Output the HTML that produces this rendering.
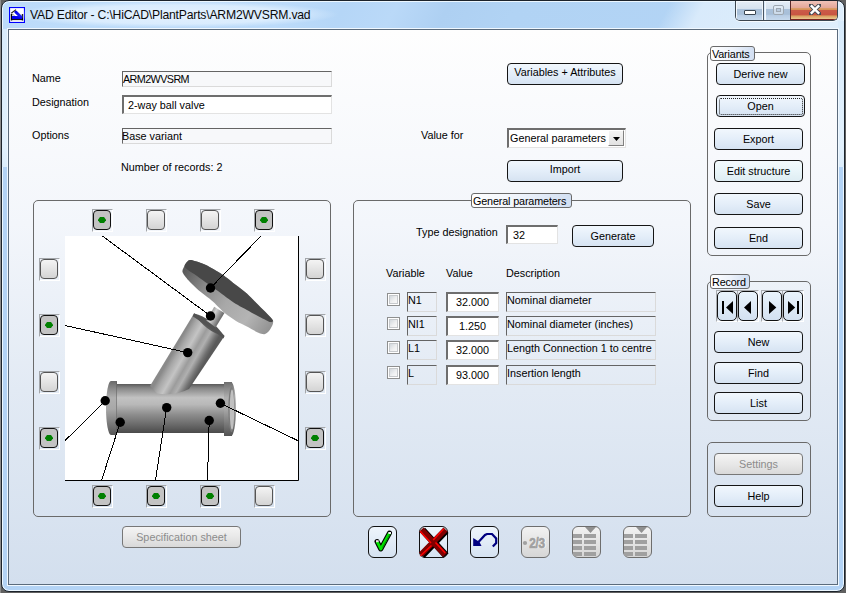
<!DOCTYPE html>
<html><head><meta charset="utf-8">
<style>
*{box-sizing:border-box}
html,body{margin:0;padding:0}
body{width:846px;height:593px;position:relative;overflow:hidden;background:#606060;font-family:"Liberation Sans",sans-serif;font-size:11px;color:#000}
.a{position:absolute}
#win{left:1px;top:0;width:844px;height:592px;border:1px solid #1c232b;border-radius:8px 8px 8px 8px;background:linear-gradient(118deg,rgba(255,255,255,0) 0%,rgba(255,255,255,0) 78%,rgba(242,249,255,0.6) 82%,rgba(242,249,255,0.7) 100%) 0 0/100% 30px no-repeat,linear-gradient(118deg,#bcdbfa 0%,#bddcfa 12%,#b9d9f9 22%,#bcdbfa 33%,#b5d6f7 40%,#bad9f8 46%,#aed0f2 52%,#b1d3f4 60%,#b4d5f6 100%) 0 0/100% 40px no-repeat,#b3d3f5;box-shadow:inset 0 0 0 1px #ecf7ff}
#client{left:8px;top:29px;width:830px;height:556px;border:1px solid #5b6b7c;background:linear-gradient(to bottom,#fefefe 0%,#f3f6fb 35%,#e2eaf4 65%,#d3dfee 100%);box-shadow:0 0 0 1px #f0f8ff}
.t{position:absolute;white-space:pre;line-height:15px;font-size:10.8px}
.btn{position:absolute;border:1px solid #151515;border-radius:4px;background:linear-gradient(to bottom,#f1f7fd 0%,#e4eef9 50%,#d6e3f2 100%);text-align:center;white-space:pre;font-size:10.8px}
.btn.dis{border-color:#777;background:linear-gradient(to bottom,#f4f4f4 0%,#e8e8e8 50%,#d9d9d9 100%);color:#8c8c8c}
.fld{position:absolute;border-top:1px solid #646464;border-left:1px solid #646464;border-right:1px solid #dadada;border-bottom:1px solid #dadada;background:#f7f8fa;white-space:pre;font-size:10.8px;line-height:13px}
.fld2{position:absolute;border-top:2px solid #6e6e6e;border-left:2px solid #6e6e6e;border-right:1px solid #e3e3e3;border-bottom:1px solid #e3e3e3;background:#fff;white-space:pre;font-size:10.8px;line-height:13px}
.grp{position:absolute;border:1px solid #6a6a6a;border-radius:5px}
.glab{position:absolute;border:1px solid #6a6a6a;border-radius:3px;background:linear-gradient(to right,#ffffff 0%,#eef3fb 50%,#d2dff2 100%);white-space:pre;font-size:10.8px;line-height:14px;padding-left:1px;letter-spacing:-0.15px}
.tog{position:absolute;width:21px;height:23px;border-top:1px solid #a3a6aa;border-left:1px solid #a3a6aa;border-right:1px solid #fff;border-bottom:1px solid #fff}
.tog i{position:absolute;left:0px;top:0px;width:18px;height:20px;border:1px solid #111;border-radius:4px;background:#c3c3c3}
.tog.off i{border-color:#555;background:linear-gradient(to bottom,#f4f4f4,#d4d4d4)}
.tog b{position:absolute;left:4px;top:6px;width:8px;height:6px;background:#008000;clip-path:polygon(25% 0,75% 0,100% 45%,100% 55%,75% 100%,25% 100%,0 55%,0 45%)}
.cb{position:absolute;width:13px;height:13px;border:1px solid #8e8f8f;background:#fff}
.cb::after{content:"";box-sizing:border-box;position:absolute;left:1px;top:1px;width:9px;height:9px;border:1px solid #c6c9cc;background:linear-gradient(135deg,#d2d8dd,#f0f1f2 60%,#f8f8f8)}
.tb{position:absolute;width:29px;height:32px;border:1px solid #111;border-radius:6px;background:linear-gradient(to bottom,#eef5fc,#d5e2f1)}
.tb.dis{border-color:#6e6e6e;background:linear-gradient(to bottom,#f2f2f2,#d6d6d6)}
.nav{position:absolute;width:22px;height:32px;border-top:1px solid #a9acb0;border-left:1px solid #a9acb0;border-right:1px solid #fff;border-bottom:1px solid #fff}
.nav i{position:absolute;left:0;top:0;width:20px;height:30px;border:1px solid #111;border-radius:5px;background:linear-gradient(to bottom,#eaf4fc,#d3e1f1)}
</style></head>
<body>
<div class="a" style="left:0;top:0;width:1px;height:593px;background:#8c8c8c"></div>
<div id="win" class="a"></div>
<!-- title -->
<svg class="a" style="left:9px;top:7px" width="16" height="16" viewBox="0 0 16 16">
<rect x="0.5" y="0.5" width="15" height="15" fill="#fff" stroke="#0000ff" stroke-width="1.2"/>
<path d="M2.5 7 V13.5 M13.5 7 V13.5" stroke="#000" stroke-width="1.4"/>
<rect x="3" y="9" width="10" height="3.2" fill="#0000f0"/>
<path d="M3 12.6 H13" stroke="#000" stroke-width="1"/>
<path d="M6.8 5 L12 10" stroke="#0000f0" stroke-width="3" stroke-linecap="round"/>
<path d="M2.2 6.2 L7 2.6" stroke="#222" stroke-width="1.1"/>
<path d="M3 7 L5.5 8.5" stroke="#777" stroke-width="0.8"/>
</svg>
<div class="a" style="left:12px;top:1px;width:326px;height:27px;background:radial-gradient(closest-side,rgba(232,244,255,0.9) 0%,rgba(228,242,255,0.75) 70%,rgba(210,232,252,0) 100%)"></div>
<div class="t" style="left:30px;top:7px;font-size:12.2px;line-height:16px;color:#0a0a0a;letter-spacing:-0.2px">VAD Editor - C:\HiCAD\PlantParts\ARM2WVSRM.vad</div>
<!-- window controls -->
<div class="a" style="left:735px;top:1px;width:103px;height:20px;border:1px solid #3c4650;border-top:none;border-radius:0 0 5px 5px;overflow:hidden;box-shadow:0 1px 0 rgba(255,255,255,0.75)">
  <div class="a" style="left:0;top:0;width:28px;height:19px;background:linear-gradient(to bottom,#f4f8fc 0%,#e2ebf5 8%,#d6e2ef 40%,#aac1da 44%,#a8bfd8 70%,#b8cde4 76%,#c6d9ed 100%);border-right:1px solid #4a5563;box-shadow:inset -1px 0 0 #eef4fa,inset 1px 1px 0 #f4f8fc"></div>
  <div class="a" style="left:29px;top:0;width:26px;height:19px;background:linear-gradient(to bottom,#f4f8fc 0%,#e2ebf5 8%,#d6e2ef 40%,#aac1da 44%,#a8bfd8 70%,#b8cde4 76%,#c6d9ed 100%);border-right:1px solid #5a2a2a;box-shadow:inset 1px 1px 0 #f4f8fc"></div>
  <div class="a" style="left:55px;top:0;width:47px;height:19px;background:linear-gradient(to bottom,#efc2b8 0%,#e3a597 40%,#d99a5c 42%,#d6905a 50%,#cb5b48 52%,#c85443 78%,#d89a5a 82%,#e8c890 100%);border-bottom:1px solid #7a2020"></div>
  <div class="a" style="left:8px;top:9px;width:12px;height:5px;background:#fff;border:1px solid #3a4550;border-radius:1px"></div>
  <div class="a" style="left:37px;top:4px;width:11px;height:10px;border:1px solid #9ea7b1;border-radius:2px;background:rgba(230,238,246,0.6)"></div>
  <div class="a" style="left:40px;top:7px;width:5px;height:4px;border:1px solid #9ea7b1;background:#b9cbdf"></div>
  <svg class="a" style="left:73px;top:3px" width="12" height="11" viewBox="0 0 12 11"><path d="M1.5 1 L10.5 10 M10.5 1 L1.5 10" stroke="#454c55" stroke-width="4.2" stroke-linecap="square"/><path d="M1.8 1.3 L10.2 9.7 M10.2 1.3 L1.8 9.7" stroke="#fff" stroke-width="2.4"/></svg>
</div>
<div class="a" style="left:2px;top:29px;width:6px;height:138px;background:linear-gradient(to bottom,#d8ebfb,#e2f1fd 85%,#dcedfb)"></div>
<div class="a" style="left:838px;top:21px;width:6px;height:146px;background:linear-gradient(to bottom,#d8ebfb,#e2f1fd 85%,#dcedfb)"></div>
<div id="client" class="a"></div>

<!-- top-left form -->
<div class="t" style="left:32px;top:71px">Name</div>
<div class="t" style="left:32px;top:95px">Designation</div>
<div class="t" style="left:32px;top:128px">Options</div>
<div class="fld" style="left:122px;top:71px;width:210px;height:16px;padding-left:0px;line-height:15px;letter-spacing:-0.6px">ARM2WVSRM</div>
<div class="fld2" style="left:122px;top:95px;width:210px;height:19px;padding-left:4px;padding-top:2px">2-way ball valve</div>
<div class="fld" style="left:122px;top:128px;width:210px;height:16px;line-height:15px;text-indent:-1px">Base variant</div>
<div class="t" style="left:121px;top:160px">Number of records: 2</div>

<div class="btn" style="left:507px;top:63px;width:116px;height:22px;line-height:17px">Variables + Attributes</div>
<div class="t" style="left:421px;top:128px">Value for</div>
<div class="fld2" style="left:507px;top:128px;width:119px;height:20px;padding-left:1px;padding-top:2px">General parameters</div>
<div class="a" style="left:608px;top:130px;width:16px;height:16px;background:linear-gradient(#f4f4f4,#e2e2e2);border-left:1px solid #fff;border-top:1px solid #fff;border-right:1px solid #808080;border-bottom:1px solid #808080"></div>
<svg class="a" style="left:613px;top:137px" width="8" height="5"><path d="M0 0H7L3.5 4Z" fill="#000"/></svg>
<div class="btn" style="left:507px;top:160px;width:116px;height:22px;line-height:17px">Import</div>

<!-- picture group -->
<div class="grp" style="left:33px;top:200px;width:298px;height:317px"></div>


<!-- picture -->
<svg class="a" style="left:0;top:0" width="846" height="593" viewBox="0 0 846 593">
<defs>
<linearGradient id="gPipe" x1="0" y1="384" x2="0" y2="433" gradientUnits="userSpaceOnUse">
<stop offset="0" stop-color="#5a5a5a"/><stop offset="0.08" stop-color="#858585"/><stop offset="0.28" stop-color="#c2c2c2"/><stop offset="0.42" stop-color="#b8b8b8"/><stop offset="0.62" stop-color="#8e8e8e"/><stop offset="0.85" stop-color="#666"/><stop offset="1" stop-color="#4a4a4a"/>
</linearGradient>
<linearGradient id="gBon" x1="176" y1="347" x2="204" y2="363" gradientUnits="userSpaceOnUse">
<stop offset="0" stop-color="#8a8a8a"/><stop offset="0.15" stop-color="#a8a8a8"/><stop offset="0.35" stop-color="#c4c4c4"/><stop offset="0.55" stop-color="#9c9c9c"/><stop offset="0.7" stop-color="#b0b0b0"/><stop offset="0.9" stop-color="#707070"/><stop offset="1" stop-color="#5a5a5a"/>
</linearGradient>
<linearGradient id="gRim" x1="183" y1="272" x2="270" y2="332" gradientUnits="userSpaceOnUse">
<stop offset="0" stop-color="#5a5a5a"/><stop offset="0.25" stop-color="#8a8a8a"/><stop offset="0.5" stop-color="#a8a8a8"/><stop offset="0.75" stop-color="#b4b4b4"/><stop offset="1" stop-color="#909090"/>
</linearGradient>
<linearGradient id="gStem" x1="208" y1="312" x2="220" y2="319" gradientUnits="userSpaceOnUse">
<stop offset="0" stop-color="#7a7a7a"/><stop offset="0.45" stop-color="#d0d0d0"/><stop offset="1" stop-color="#707070"/>
</linearGradient>
<linearGradient id="gFl" x1="0" y1="381" x2="0" y2="437" gradientUnits="userSpaceOnUse">
<stop offset="0" stop-color="#6a6a6a"/><stop offset="0.3" stop-color="#b0b0b0"/><stop offset="0.5" stop-color="#a8a8a8"/><stop offset="1" stop-color="#505050"/>
</linearGradient>
</defs>
<rect x="65" y="236" width="233" height="244" fill="#fff"/>
<path d="M298.5 236V480.5H65" stroke="#000" fill="none"/>
<!-- pipe -->
<rect x="112" y="384" width="115" height="49" fill="url(#gPipe)"/>
<path d="M117 381 L111 381 A5 27 0 0 0 111 435 L117 435 Z" fill="url(#gFl)"/>
<path d="M116.5 382 V434" stroke="#5a5a5a" stroke-width="0.8" opacity="0.6"/>
<rect x="224" y="382" width="8" height="54" fill="url(#gFl)"/>
<ellipse cx="231" cy="409" rx="5" ry="27" fill="url(#gFl)"/>
<ellipse cx="231.5" cy="409.5" rx="3.2" ry="22.5" fill="#7c7c7c"/>
<ellipse cx="232" cy="409.5" rx="2.3" ry="20" fill="#c0c0c0"/>
<!-- bonnet -->
<path d="M194 313.5 L224.3 336.3 L189 389 Q175 396 157 393.6 L150 386 Z" fill="url(#gBon)"/>
<path d="M194 313.5 Q212 318 224.3 336.3 Q206 332 194 313.5Z" fill="#585858"/>
<!-- stem -->
<path d="M214.2 306.8 L224.5 312.9 L215.3 328.1 L205.5 322 Z" fill="url(#gStem)"/>
<path d="M194.1 313.3 Q211 322 224.5 335.7 L223.5 338.5 Q209 326 192.6 316.2 Z" fill="#525252"/>
<!-- disc -->
<path d="M184.5 266.0 C183.8 267.4 182.0 270.1 182.5 272.0 C183.0 273.9 186.5 278.1 188.4 280.3 C190.3 282.5 194.6 286.7 196.9 288.7 C199.2 290.7 203.1 293.7 205.3 295.5 C207.5 297.3 211.1 299.8 213.7 302.2 C216.3 304.6 222.0 310.8 225.0 313.3 C228.0 315.8 233.1 319.2 236.0 321.0 C238.9 322.8 244.0 325.0 246.9 326.5 C249.8 328.0 255.6 331.5 257.9 332.5 C260.2 333.5 262.9 334.4 264.4 334.2 C265.9 334.0 267.9 332.2 269.0 331.0 C270.1 329.8 272.0 326.4 272.5 325.0 C273.0 323.6 273.5 321.8 273.0 320.5 C272.5 319.2 270.8 317.6 268.8 315.5 C266.8 313.4 260.8 307.5 257.9 304.6 C255.0 301.7 249.8 296.2 246.9 293.6 C244.0 291.0 239.3 287.5 236.0 284.9 C232.7 282.3 226.3 277.1 222.2 274.4 C218.1 271.7 209.5 266.6 205.3 264.7 C201.1 262.8 193.4 260.4 191.0 260.0 C188.6 259.6 188.4 260.7 187.5 261.5 C186.6 262.3 185.2 264.6 184.5 266.0Z" fill="url(#gRim)"/>
<path d="M184.5 266.0 C184.4 264.9 186.6 262.3 187.5 261.5 C188.4 260.7 188.6 259.6 191.0 260.0 C193.4 260.4 201.1 262.8 205.3 264.7 C209.5 266.6 218.1 271.7 222.2 274.4 C226.3 277.1 232.7 282.3 236.0 284.9 C239.3 287.5 244.0 291.0 246.9 293.6 C249.8 296.2 255.0 301.7 257.9 304.6 C260.8 307.5 266.8 313.4 268.8 315.5 C270.8 317.6 272.8 319.6 273.0 320.5 C273.2 321.4 272.0 322.6 270.0 322.0 C268.0 321.4 261.0 317.6 257.9 316.0 C254.8 314.4 249.8 311.6 246.9 310.0 C244.0 308.4 238.5 305.5 236.0 304.0 C233.5 302.5 230.1 300.0 228.0 298.5 C225.9 297.0 222.3 294.2 220.0 292.5 C217.7 290.8 213.9 288.2 210.8 286.0 C207.7 283.8 200.0 278.1 197.0 276.0 C194.0 273.9 189.7 271.3 188.0 270.0 C186.3 268.7 184.6 267.1 184.5 266.0Z" fill="#484848"/>
<!-- lines -->
<g stroke="#000" stroke-width="1" fill="none" shape-rendering="crispEdges">
<path d="M102.4 236 L210.5 316"/>
<path d="M261 236 L210.5 288"/>
<path d="M65 325.5 L187.7 352.6"/>
<path d="M65 440.7 L105.2 400.8"/>
<path d="M298 440.7 L220.4 403.3"/>
<path d="M101.7 480 L120.2 422.3"/>
<path d="M155.5 480 L166.7 407.6"/>
<path d="M207.5 480 L209.2 420.5"/>
</g>
<g fill="#000">
<circle cx="210.5" cy="288" r="4.7"/><circle cx="210.5" cy="316" r="4.7"/><circle cx="187.7" cy="352.6" r="4.7"/>
<circle cx="105.2" cy="400.8" r="4.7"/><circle cx="120.2" cy="422.3" r="4.7"/><circle cx="166.7" cy="407.6" r="4.7"/>
<circle cx="220.4" cy="403.3" r="4.7"/><circle cx="209.2" cy="420.5" r="4.7"/>
</g>
</svg>
<div class="tog" style="left:92px;top:209px"><i><b></b></i></div>
<div class="tog off" style="left:146px;top:209px"><i></i></div>
<div class="tog off" style="left:200px;top:209px"><i></i></div>
<div class="tog" style="left:254px;top:209px"><i><b></b></i></div>
<div class="tog" style="left:92px;top:485px"><i><b></b></i></div>
<div class="tog" style="left:146px;top:485px"><i><b></b></i></div>
<div class="tog" style="left:200px;top:485px"><i><b></b></i></div>
<div class="tog off" style="left:254px;top:485px"><i></i></div>
<div class="tog off" style="left:39px;top:258px"><i></i></div>
<div class="tog" style="left:39px;top:314px"><i><b></b></i></div>
<div class="tog off" style="left:39px;top:371px"><i></i></div>
<div class="tog" style="left:39px;top:427px"><i><b></b></i></div>
<div class="tog off" style="left:305px;top:258px"><i></i></div>
<div class="tog off" style="left:305px;top:314px"><i></i></div>
<div class="tog off" style="left:305px;top:371px"><i></i></div>
<div class="tog" style="left:305px;top:427px"><i><b></b></i></div>

<!-- general parameters group -->
<div class="grp" style="left:353px;top:200px;width:338px;height:317px"></div>
<div class="glab" style="left:471px;top:193px;width:101px;height:15px">General parameters</div>
<div class="t" style="left:416px;top:225px">Type designation</div>
<div class="fld2" style="left:506px;top:225px;width:52px;height:19px;padding-left:5px;padding-top:2px">32</div>
<div class="btn" style="left:572px;top:225px;width:82px;height:22px;line-height:20px">Generate</div>
<div class="t" style="left:386px;top:266px">Variable</div>
<div class="t" style="left:446px;top:266px">Value</div>
<div class="t" style="left:506px;top:266px">Description</div>

<div class="cb" style="left:387px;top:293px"></div>
<div class="fld" style="left:407px;top:292px;width:30px;height:20px;background:transparent;padding-top:1px">N1</div>
<div class="fld2" style="left:446px;top:292px;width:53px;height:20px;text-align:center;padding-top:2px;padding-right:1px">32.000</div>
<div class="fld" style="left:506px;top:292px;width:150px;height:20px;background:transparent;padding-top:1px">Nominal diameter</div>

<div class="cb" style="left:387px;top:317px"></div>
<div class="fld" style="left:407px;top:316px;width:30px;height:20px;background:transparent;padding-top:1px">NI1</div>
<div class="fld2" style="left:446px;top:316px;width:53px;height:20px;text-align:center;padding-top:2px;padding-right:1px">1.250</div>
<div class="fld" style="left:506px;top:316px;width:150px;height:20px;background:transparent;padding-top:1px">Nominal diameter (inches)</div>

<div class="cb" style="left:387px;top:341px"></div>
<div class="fld" style="left:407px;top:340px;width:30px;height:20px;background:transparent;padding-top:1px">L1</div>
<div class="fld2" style="left:446px;top:340px;width:53px;height:20px;text-align:center;padding-top:2px;padding-right:1px">32.000</div>
<div class="fld" style="left:506px;top:340px;width:150px;height:20px;background:transparent;padding-top:1px">Length Connection 1 to centre</div>

<div class="cb" style="left:387px;top:366px"></div>
<div class="fld" style="left:407px;top:365px;width:30px;height:20px;background:transparent;padding-top:1px">L</div>
<div class="fld2" style="left:446px;top:365px;width:53px;height:20px;text-align:center;padding-top:2px;padding-right:1px">93.000</div>
<div class="fld" style="left:506px;top:365px;width:150px;height:20px;background:transparent;padding-top:1px">Insertion length</div>

<!-- variants group -->
<div class="grp" style="left:707px;top:52px;width:104px;height:204px"></div>
<div class="glab" style="left:710px;top:46px;width:45px;height:15px">Variants</div>
<div class="btn" style="left:716px;top:63px;width:89px;height:22px;line-height:20px">Derive new</div>
<div class="btn" style="left:716px;top:95px;width:89px;height:22px;line-height:20px">Open</div>
<div class="a" style="left:719px;top:98px;width:84px;height:17px;border:1px dotted #222;border-radius:2px"></div>
<div class="btn" style="left:714px;top:128px;width:89px;height:22px;line-height:20px">Export</div>
<div class="btn" style="left:714px;top:160px;width:89px;height:22px;line-height:20px;background:linear-gradient(to bottom,#f3fafd 0%,#e9f5f9 50%,#deedf3 100%)">Edit structure</div>
<div class="btn" style="left:714px;top:193px;width:89px;height:22px;line-height:20px">Save</div>
<div class="btn" style="left:714px;top:227px;width:89px;height:22px;line-height:20px">End</div>

<!-- record group -->
<div class="grp" style="left:707px;top:281px;width:104px;height:140px"></div>
<div class="glab" style="left:710px;top:274px;width:40px;height:15px">Record</div>
<div class="nav" style="left:716px;top:290px"><i></i></div>
<div class="nav" style="left:737px;top:290px"><i></i></div>
<div class="nav" style="left:761px;top:290px"><i></i></div>
<div class="nav" style="left:782px;top:290px"><i></i></div>
<svg class="a" style="left:0;top:0" width="846" height="593" viewBox="0 0 846 593">
<rect x="722" y="301" width="2" height="13" fill="#000"/>
<path d="M726 307.5 L733 301 V314 Z" fill="#000"/>
<path d="M744 307.5 L751 301 V314 Z" fill="#000"/>
<path d="M776.3 307.5 L769 301 V314 Z" fill="#000"/>
<path d="M795.2 307.5 L788 301 V314 Z" fill="#000"/>
<rect x="797" y="301" width="2" height="13" fill="#000"/>
</svg>
<div class="btn" style="left:714px;top:331px;width:89px;height:22px;line-height:20px">New</div>
<div class="btn" style="left:714px;top:362px;width:89px;height:22px;line-height:20px">Find</div>
<div class="btn" style="left:714px;top:392px;width:89px;height:22px;line-height:20px">List</div>

<!-- settings group -->
<div class="grp" style="left:707px;top:442px;width:104px;height:75px"></div>
<div class="btn dis" style="left:714px;top:453px;width:89px;height:22px;line-height:20px">Settings</div>
<div class="btn" style="left:714px;top:485px;width:89px;height:22px;line-height:20px">Help</div>

<!-- spec sheet -->
<div class="btn dis" style="left:122px;top:526px;width:119px;height:22px;line-height:20px">Specification sheet</div>

<!-- toolbar -->
<div class="tb" style="left:368px;top:526px"></div>
<div class="tb" style="left:419px;top:526px"></div>
<div class="tb" style="left:470px;top:526px"></div>
<div class="tb dis" style="left:521px;top:526px"></div>
<div class="tb dis" style="left:572px;top:526px"></div>
<div class="tb dis" style="left:623px;top:526px"></div>
<svg class="a" style="left:0;top:0" width="846" height="593" viewBox="0 0 846 593">
<!-- check -->
<path d="M377 541.5 L380.8 549 L389.5 533" stroke="#000" stroke-width="5" fill="none" stroke-linecap="round" stroke-linejoin="round"/>
<path d="M377 541.5 L380.8 549 L389.5 533" stroke="#00e400" stroke-width="2.8" fill="none" stroke-linecap="butt" stroke-linejoin="round"/>
<path d="M382.6 547.5 L390.2 533.8" stroke="#008a00" stroke-width="1" fill="none"/>
<rect x="376" y="540.2" width="2.6" height="2" fill="#f4e4ec"/><rect x="388.4" y="532" width="2.6" height="2" fill="#f4f4f4"/>
<!-- X -->
<path d="M422.5 530 L446 555.5 M446 530.5 L422 555.5" stroke="#000" stroke-width="7" fill="none"/>
<path d="M421.5 529.5 L445 555 M445.5 529.5 L421 554.5" stroke="#800000" stroke-width="5.6" fill="none"/>
<path d="M420.2 531.2 L431 543 M443.8 528.8 L433.2 540 M431.5 545.5 L420.2 556 M435.5 542.5 L445.2 553" stroke="#ff0000" stroke-width="1.5" fill="none"/>
<!-- undo -->
<path d="M478.5 542 L485 535 L487 534 L492 534 L496.2 538.5 L496.2 543 L492.8 546.5" stroke="#000080" stroke-width="2.2" fill="none"/>
<path d="M473.2 538 L478 541 L479.5 542 L481.5 546 L473.2 546 Z" fill="#000080"/>
<!-- 2/3 -->
<g font-family="Liberation Sans" font-weight="bold" font-size="14.5">
<text transform="translate(529.2 547.6) scale(0.82 1)" x="1" y="0.8" fill="#fafafa" stroke="#fafafa" stroke-width="0.5" letter-spacing="-0.3">2/3</text>
<circle cx="525" cy="543" r="2.1" fill="#a0a0a0"/>
<text transform="translate(529.2 547.6) scale(0.82 1)" x="0" y="0" fill="#a0a0a0" stroke="#a0a0a0" stroke-width="0.6" letter-spacing="-0.3">2/3</text>
</g>
<!-- table icons -->
<g id="tbl">
<rect x="573" y="534" width="9" height="4" fill="#a0a0a0"/><rect x="584" y="534" width="12" height="4" fill="#a0a0a0"/>
<rect x="573" y="540" width="9" height="4" fill="#a0a0a0"/><rect x="584" y="540" width="12" height="4" fill="#a0a0a0"/>
<rect x="573" y="546" width="9" height="4" fill="#a0a0a0"/><rect x="584" y="546" width="12" height="4" fill="#a0a0a0"/>
<rect x="573" y="552" width="9" height="4" fill="#a0a0a0"/><rect x="584" y="552" width="12" height="4" fill="#a0a0a0"/>
<path d="M585 527 H596 L590.5 533 Z" fill="#909090"/>
</g>
<use href="#tbl" x="51" y="0"/>
</svg>

</body></html>
